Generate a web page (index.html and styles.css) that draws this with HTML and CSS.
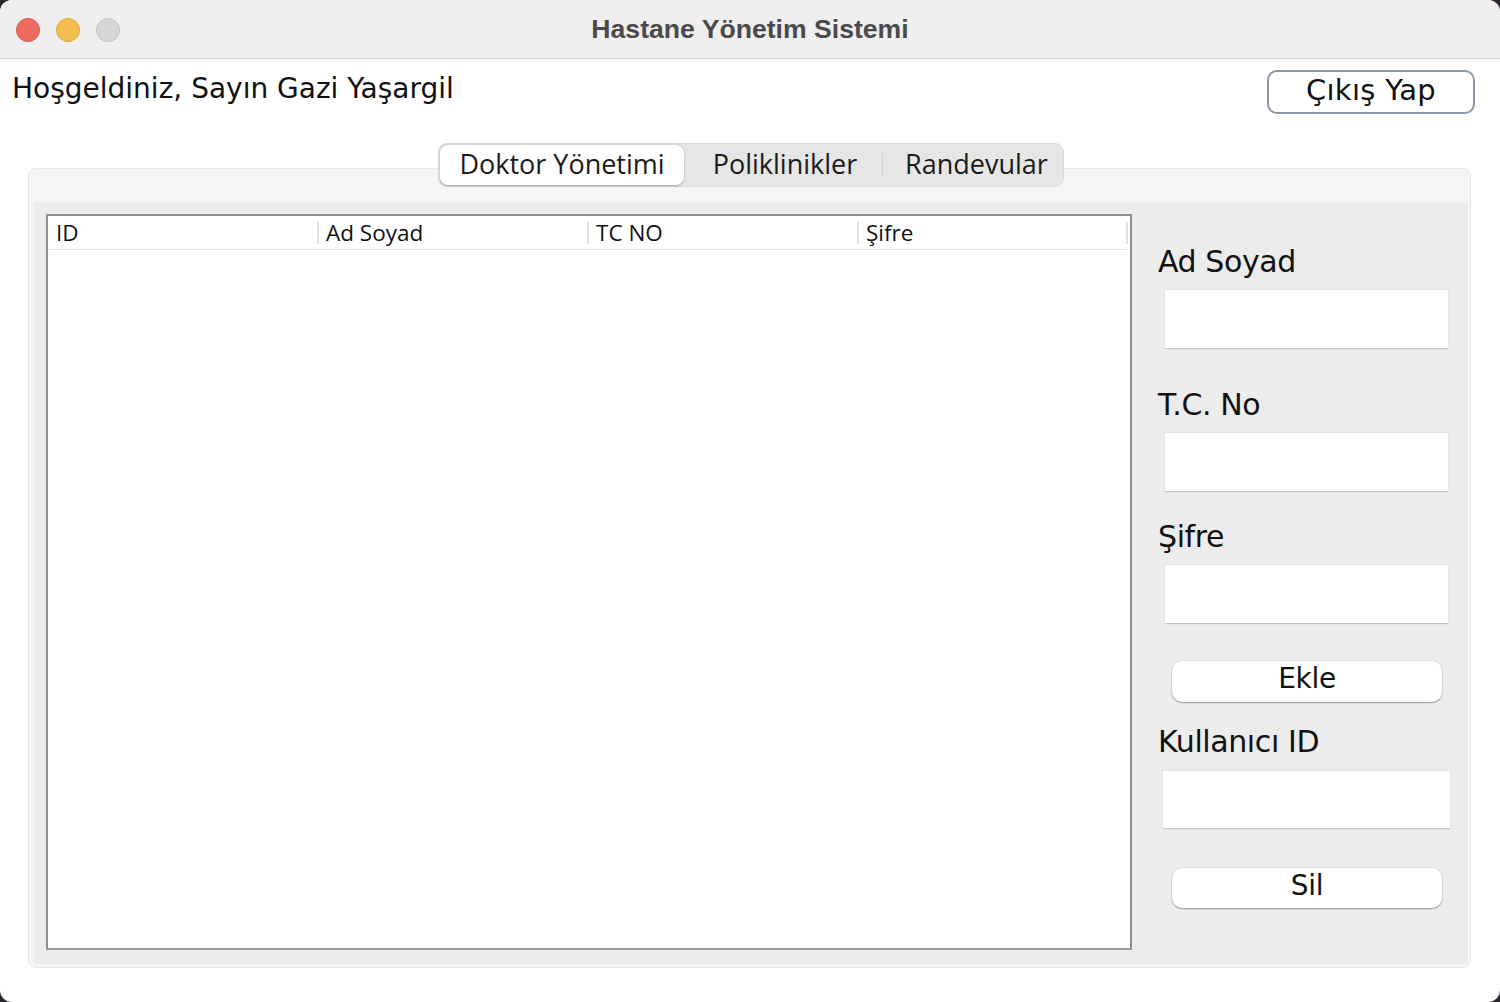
FILE: index.html
```html
<!DOCTYPE html>
<html lang="tr">
<head>
<meta charset="utf-8">
<title>Hastane Yönetim Sistemi</title>
<link rel="stylesheet" href="styles.css">
</head>
<body>
<div class="window">
  <div class="titlebar">
    <div class="lights">
      <span class="light light-red"></span>
      <span class="light light-yellow"></span>
      <span class="light light-gray"></span>
    </div>
    <div class="title">Hastane Yönetim Sistemi</div>
    <div></div>
  </div>
  <div class="content">
    <div class="header">
      <div class="welcome">Hoşgeldiniz, Sayın Gazi Yaşargil</div>
      <button class="logout">Çıkış Yap</button>
    </div>
    <div class="tabs-wrap">
      <div class="tabs">
        <div class="tab tab-active">Doktor Yönetimi</div>
        <div class="tab">Poliklinikler</div>
        <div class="tab-sep"></div>
        <div class="tab">Randevular</div>
      </div>
    </div>
    <div class="panel">
      <div class="pane">
        <div class="table">
          <div class="thead">
            <div class="th">ID</div>
            <div class="th">Ad Soyad</div>
            <div class="th">TC NO</div>
            <div class="th">Şifre</div>
          </div>
        </div>
        <div class="form">
          <div class="label label-1">Ad Soyad</div>
          <div class="input"></div>
          <div class="label label-2">T.C. No</div>
          <div class="input"></div>
          <div class="label label-3">Şifre</div>
          <div class="input"></div>
          <button class="btn btn-ekle">Ekle</button>
          <div class="label label-4">Kullanıcı ID</div>
          <div class="input input-wide"></div>
          <button class="btn btn-sil">Sil</button>
        </div>
      </div>
    </div>
  </div>
</div>
</body>
</html>
```

FILE: styles.css
```css
* { box-sizing: border-box; }
html, body {
  margin: 0;
  padding: 0;
  width: 1500px;
  height: 1002px;
  overflow: hidden;
  background: #2b2631;
}
.window {
  width: 1500px;
  height: 1002px;
  background: #ffffff;
  border-radius: 12px;
  overflow: hidden;
  display: flex;
  flex-direction: column;
}
.titlebar {
  height: 59px;
  flex: none;
  background: #f0eeef;
  border-bottom: 1px solid #d9d7d8;
  display: grid;
  grid-template-columns: 1fr auto 1fr;
  align-items: center;
}
.lights {
  display: flex;
  gap: 16px;
  padding-left: 16px;
  padding-top: 2px;
}
.light {
  width: 24px;
  height: 24px;
  border-radius: 50%;
  display: block;
}
.light-red { background: #ed6a5e; border: 1px solid #d85a50; }
.light-yellow { background: #f5bf4f; border: 1px solid #dea93f; }
.light-gray { background: #d7d5d6; border: 1px solid #c4c2c3; }
.title {
  font-family: "Liberation Sans", Arial, sans-serif;
  font-weight: bold;
  font-size: 26.6px;
  color: #4b4a4b;
}
.content {
  flex: 1;
  display: flex;
  flex-direction: column;
}
.header {
  display: flex;
  justify-content: space-between;
  align-items: flex-start;
  padding: 10px 25px 0 12px;
  height: 84px;
}
.welcome {
  font-family: "DejaVu Sans", sans-serif;
  font-size: 28px;
  line-height: 40px;
  color: #111;
  margin-top: 0;
  letter-spacing: 0;
}
.logout {
  width: 208px;
  height: 44px;
  margin-top: 1px;
  border: 2px solid #8b99a9;
  border-radius: 10px;
  background: #fff;
  font-family: "DejaVu Sans", sans-serif;
  font-size: 29px;
  color: #111;
  padding: 0 0 5px 0;
  letter-spacing: 0.3px;
}
.tabs-wrap {
  display: flex;
  justify-content: center;
  position: relative;
  z-index: 1;
  padding-left: 2px;
}
.tabs {
  display: flex;
  align-items: center;
  height: 44px;
  background: #e6e6e6;
  border: 1px solid #dcdcdc;
  border-radius: 9px;
  padding: 1px;
  font-family: "Open Sans", sans-serif;
  font-size: 27px;
  color: #1a1a1a;
}
.tab {
  height: 40px;
  line-height: 38px;
  text-align: center;
}
.tab-active {
  background: #fff;
  border-radius: 8px;
  box-shadow: 0 0.5px 2px rgba(0,0,0,0.3);
  width: 244px;
}
.tabs .tab:nth-child(2) { width: 198px; padding-left: 4px; }
.tabs .tab:nth-child(4) { width: 179px; padding-left: 8px; }
.tab-sep {
  width: 1px;
  height: 24px;
  background: #cfcfcf;
}
.panel {
  margin: -19px 29px 0 28px;
  height: 800px;
  background: #f5f5f5;
  border: 1px solid #e6e6e6;
  border-radius: 8px;
  padding: 33px 2px 3px 5px;
}
.pane {
  height: 100%;
  background: #ececec;
  display: flex;
  padding: 12px 0 14px 12px;
}
.table {
  width: 1086px;
  height: 736px;
  flex: none;
  background: #fff;
  border: 2px solid #8e8e8e;
  border-bottom-color: #999;
  padding: 0 3px 0 1px;
}
.thead {
  display: grid;
  grid-template-columns: 270px 270px 270px 269px;
  height: 34px;
  border-bottom: 1px solid #e2e2e2;
  align-items: center;
  font-family: "Open Sans", sans-serif;
  font-size: 22.5px;
  color: #111;
}
.th {
  padding-left: 7px;
  border-right: 2px solid #e0e0e0;
  height: 22px;
  line-height: 22px;
}
.form {
  flex: 1;
  display: flex;
  flex-direction: column;
  padding-left: 26px;
}
.label {
  font-family: "DejaVu Sans", sans-serif;
  font-size: 30px;
  line-height: 36px;
  height: 36px;
  color: #111;
  letter-spacing: -0.4px;
}
.label-1 { margin-top: 30px; }
.label-2 { margin-top: 39px; }
.label-3 { margin-top: 28px; }
.label-4 { margin-top: 22px; }
.input {
  width: 283px;
  height: 59px;
  margin-left: 7px;
  margin-top: 9px;
  background: #fff;
  border-top: 1px solid #e2e2e2;
  box-shadow: 0 1px 1px #c5c5c5;
}
.input-wide {
  width: 287px;
  margin-left: 5px;
  margin-top: 10px;
  height: 58px;
}
.btn {
  width: 270px;
  height: 41px;
  margin-left: 14px;
  border: none;
  border-radius: 10px;
  background: #fff;
  box-shadow: 0 1px 1.5px rgba(0,0,0,0.35), 0 0 0 0.5px rgba(0,0,0,0.08);
  font-family: "DejaVu Sans", sans-serif;
  font-size: 28px;
  color: #111;
  padding: 0 0 6px 0;
  letter-spacing: -0.3px;
}
.btn-ekle { margin-top: 38px; }
.btn-sil { margin-top: 40px; height: 40px; }
```
